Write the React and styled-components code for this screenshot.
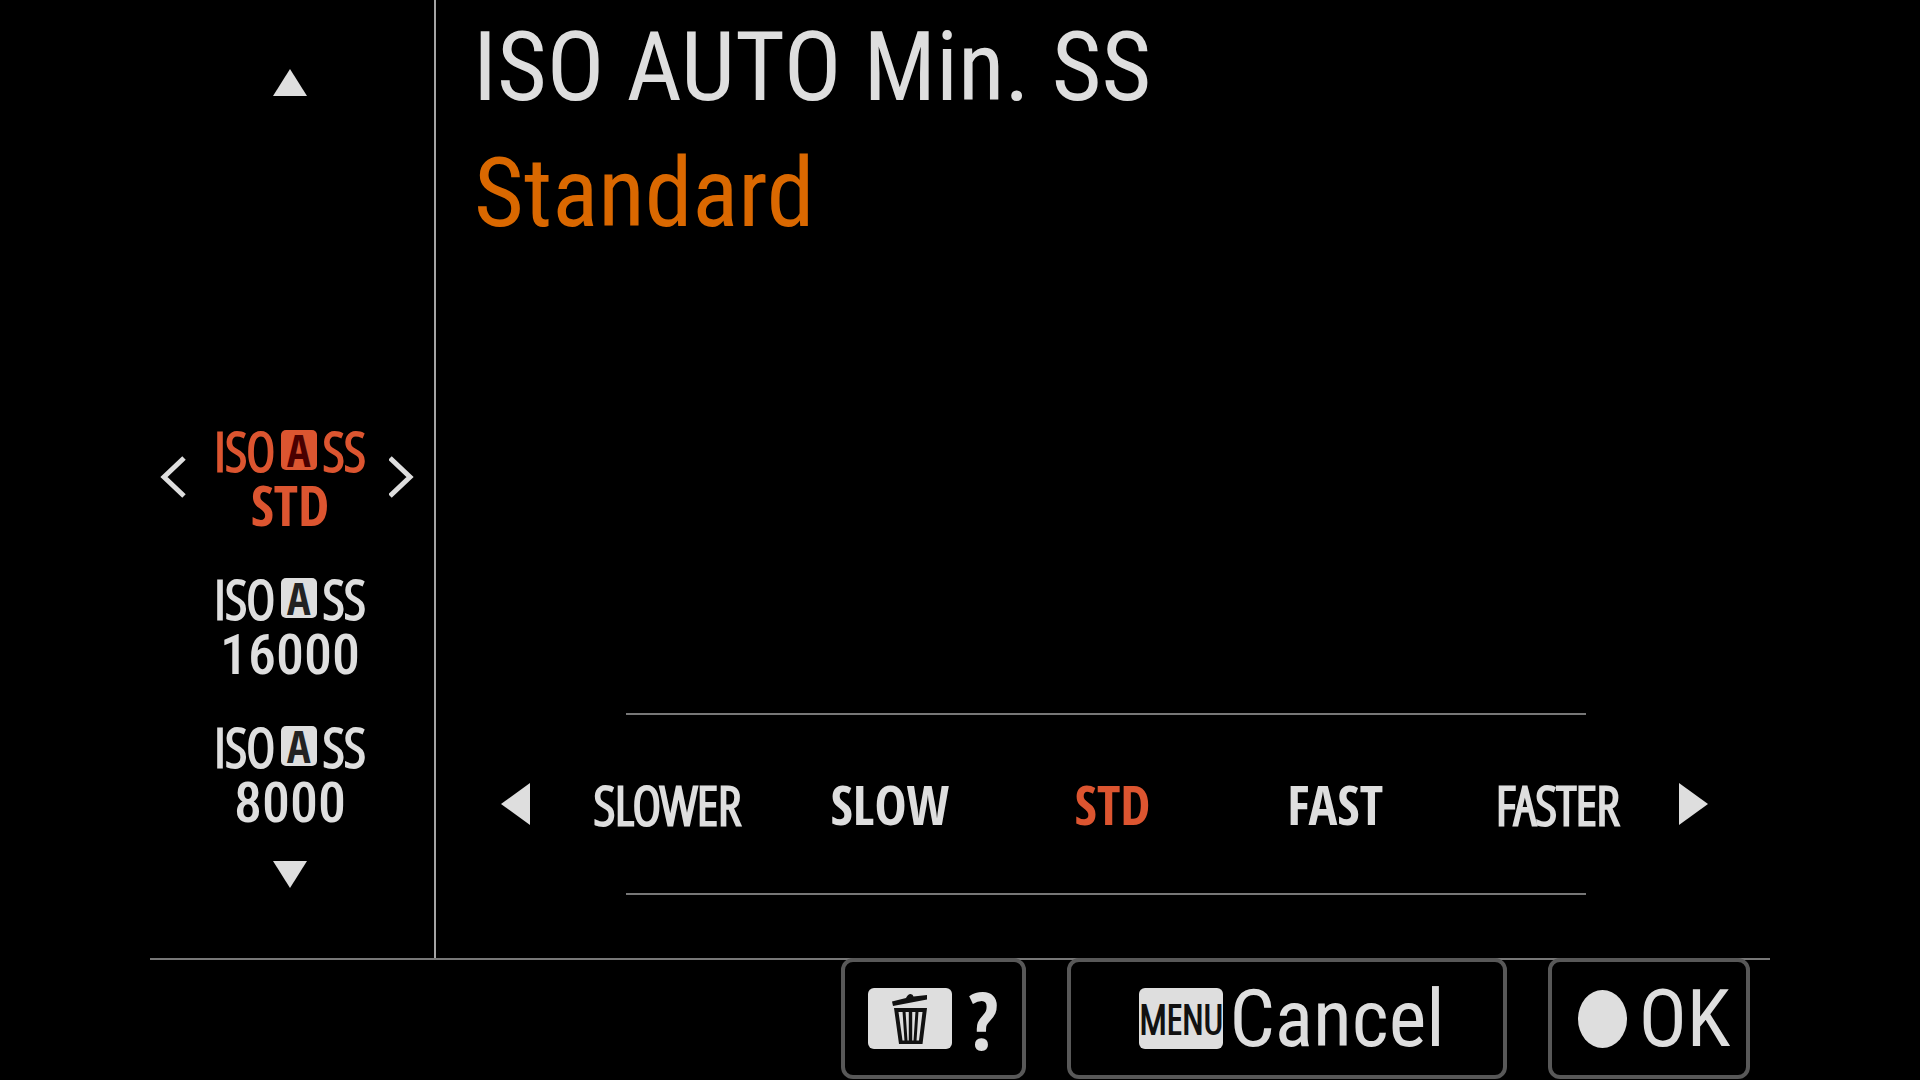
import { useState } from 'react'
import styled, { createGlobalStyle } from 'styled-components'

const GlobalStyle = createGlobalStyle`
   * {
      box-sizing: border-box;
   }
   body {
      margin: 0;
      background: #000;
      color: #dedede;
      font-family: 'Roboto Condensed', Roboto, sans-serif;
   }
   button {
      padding: 0;
      border: 0;
      background: none;
      color: inherit;
      font-family: inherit;
      cursor: pointer;
   }
   svg {
      display: block;
      fill: currentColor;
   }
`

const Screen = styled.div`
   display: flex;
   flex-direction: column;
   min-height: 100vh;
   padding: 0 150px;
`

const Body = styled.div`
   display: flex;
   flex: 1;
`

// left column with the function items
const Sidebar = styled.nav`
   display: flex;
   flex-direction: column;
   align-items: center;
   justify-content: space-between;
   width: 286px;
   padding: 69px 14px 70px 10px;
   border-right: 2px solid #a4a4a4;
`

const ItemList = styled.div`
   display: flex;
   flex-direction: column;
   gap: 40px;
   width: 100%;
   margin-top: auto;
   margin-bottom: 34px;
`

const ItemRow = styled.div`
   display: flex;
   align-items: center;
   justify-content: ${(props) => (props.$active ? 'space-between' : 'center')};
   height: 108px;
`

const Item = styled.button`
   display: flex;
   flex-direction: column;
   align-items: center;
   justify-content: flex-start;
   height: 108px;
   color: ${(props) => (props.$active ? '#dc5530' : '#dedede')};
`

const ItemLabel = styled.span`
   display: flex;
   align-items: center;
   gap: 6px;
   height: 54px;
   font-family: 'Open Sans Condensed Light', 'Open Sans Condensed', sans-serif;
   font-size: 54px;
   line-height: 54px;
   -webkit-text-stroke: 3px currentColor;
`

const AutoBadge = styled.span`
   width: 36px;
   height: 40px;
   border-radius: 5px;
   background: ${(props) => (props.$active ? '#dc5530' : '#dedede')};
   color: ${(props) => (props.$active ? '#4a0000' : '#222')};
   font-family: 'Open Sans Condensed', sans-serif;
   font-size: 44px;
   font-weight: bold;
   line-height: 40px;
   text-align: center;
   -webkit-text-stroke: 0;
`

const ItemValue = styled.span`
   font-family: ${(props) => (props.$number ? 'inherit' : "'Open Sans Condensed', sans-serif")};
   font-size: 56px;
   font-weight: ${(props) => (props.$number ? '500' : 'bold')};
   line-height: ${(props) => (props.$number ? '60px' : '54px')};
`

const Panel = styled.main`
   display: flex;
   flex: 1;
   flex-direction: column;
   min-width: 0;
   padding-bottom: 63px;
`

const Title = styled.h1`
   margin: 4px 0 0 37px;
   font-size: 96px;
   font-weight: normal;
   line-height: 126px;
`

const Current = styled.p`
   margin: 0 0 auto 38px;
   color: #da6800;
   font-size: 96px;
   line-height: 126px;
`

const Line = styled.hr`
   width: auto;
   height: 2px;
   margin: 0 184px 0 190px;
   border: 0;
   background: #777;
`

const OptionBar = styled.div`
   display: flex;
   align-items: center;
   height: 178px;
   padding: 0 62px 0 65px;
`

const Options = styled.div`
   display: grid;
   flex: 1;
   grid-template-columns: repeat(5, 1fr);
   padding: 0 10px 0 26px;
`

// names over four letters use the lighter, narrower face
const Option = styled.button`
   color: ${(props) => (props.$active ? '#dc5530' : '#dedede')};
   font-family: ${(props) => (props.$long ? "'Open Sans Condensed Light'" : "'Open Sans Condensed'")}, sans-serif;
   font-size: 54px;
   font-weight: ${(props) => (props.$long ? '300' : 'bold')};
   line-height: 54px;
   -webkit-text-stroke: ${(props) => (props.$long ? '3px' : '0')} currentColor;
`

const Footer = styled.footer`
   display: flex;
   justify-content: flex-end;
   gap: 41px;
   padding: 0 20px 1px 0;
   border-top: 2px solid #777;
`

const FooterButton = styled.button`
   display: flex;
   align-items: center;
   justify-content: center;
   gap: ${(props) => props.$gap || '6px'};
   width: ${(props) => props.$width};
   height: 121px;
   margin-top: -2px;
   padding-left: ${(props) => (props.$labelled ? '10px' : '0')};
   border: 4px solid #585858;
   border-radius: 12px;
   font-size: 80px;
   line-height: 110px;
`

const KeyBadge = styled.span`
   display: flex;
   align-items: center;
   justify-content: center;
   width: 84px;
   height: 61px;
   border-radius: 6px;
   background: #dedede;
   color: #111;
   font-family: 'Open Sans Condensed Light', sans-serif;
   font-size: 40px;
   line-height: 61px;
   -webkit-text-stroke: 2px currentColor;
`

const HelpMark = styled.span`
   font-family: 'Open Sans Condensed', sans-serif;
   font-weight: bold;
`

const items = [
   { id: 'std', value: 'STD' },
   { id: '16000', value: '16000' },
   { id: '8000', value: '8000' },
]

const options = ['SLOWER', 'SLOW', 'STD', 'FAST', 'FASTER']

const Triangle = ({ width, height, points }) => (
   <svg width={width} height={height} viewBox={`0 0 ${width} ${height}`} aria-hidden="true">
      <polygon points={points} />
   </svg>
)

const Chevron = ({ points }) => (
   <svg width="31" height="42" viewBox="0 0 31 42" aria-hidden="true">
      <polyline points={points} fill="none" stroke="currentColor" strokeWidth="5" />
   </svg>
)

const TrashIcon = () => (
   <svg width="36" height="50" viewBox="0 0 36 50" aria-hidden="true">
      <path d="M0 7.5 L14 4 Q16 0 18.5 0 Q21 0 21.5 2.5 L35 1 V5.5 L1 12 Z" />
      <path fillRule="evenodd" d="M2 14 H35 L30.5 50 H7 Z M6.5 18 L10.5 46.5 H27 L30.5 18 Z" />
      <path d="M10.5 17 H13.5 L15.5 47 H12.5 Z M16.8 17 H20.2 V47 H16.8 Z M23.5 17 H26.5 L24.5 47 H21.5 Z" />
   </svg>
)

function App() {
   const [item, setItem] = useState('std')
   const [option, setOption] = useState('STD')

   return (
      <>
         <GlobalStyle />
         <Screen>
            <Body>
               <Sidebar>
                  <button type="button" aria-label="Up">
                     <Triangle width={34} height={27} points="17,0 34,27 0,27" />
                  </button>
                  <ItemList>
                     {items.map(({ id, value }) => {
                        const active = id === item
                        return (
                           <ItemRow key={id} $active={active}>
                              {active && (
                                 <button type="button" aria-label="Previous">
                                    <Chevron points="24,2 4,21 24,40" />
                                 </button>
                              )}
                              <Item type="button" $active={active} onClick={() => setItem(id)}>
                                 <ItemLabel>
                                    ISO
                                    <AutoBadge $active={active}>A</AutoBadge>
                                    SS
                                 </ItemLabel>
                                 <ItemValue $number={value !== 'STD'}>{value}</ItemValue>
                              </Item>
                              {active && (
                                 <button type="button" aria-label="Next">
                                    <Chevron points="1,2 21,21 1,40" />
                                 </button>
                              )}
                           </ItemRow>
                        )
                     })}
                  </ItemList>
                  <button type="button" aria-label="Down">
                     <Triangle width={34} height={27} points="0,0 34,0 17,27" />
                  </button>
               </Sidebar>

               <Panel>
                  <Title>ISO AUTO Min. SS</Title>
                  <Current>Standard</Current>
                  <Line />
                  <OptionBar>
                     <button type="button" aria-label="Slower">
                        <Triangle width={29} height={42} points="29,0 29,42 0,21" />
                     </button>
                     <Options>
                        {options.map((name) => (
                           <Option
                              key={name}
                              type="button"
                              $active={name === option}
                              $long={name.length > 4}
                              onClick={() => setOption(name)}
                           >
                              {name}
                           </Option>
                        ))}
                     </Options>
                     <button type="button" aria-label="Faster">
                        <Triangle width={29} height={42} points="0,0 29,21 0,42" />
                     </button>
                  </OptionBar>
                  <Line />
               </Panel>
            </Body>

            <Footer>
               <FooterButton type="button" $width="185px" $gap="16px" aria-label="Help">
                  <KeyBadge>
                     <TrashIcon />
                  </KeyBadge>
                  <HelpMark>?</HelpMark>
               </FooterButton>
               <FooterButton type="button" $width="440px" $labelled>
                  <KeyBadge>MENU</KeyBadge>
                  Cancel
               </FooterButton>
               <FooterButton type="button" $width="202px" $gap="12px" $labelled>
                  <svg width="49" height="58" viewBox="0 0 49 58" aria-hidden="true">
                     <ellipse cx="24.5" cy="29" rx="24.5" ry="29" />
                  </svg>
                  OK
               </FooterButton>
            </Footer>
         </Screen>
      </>
   )
}

export default App
